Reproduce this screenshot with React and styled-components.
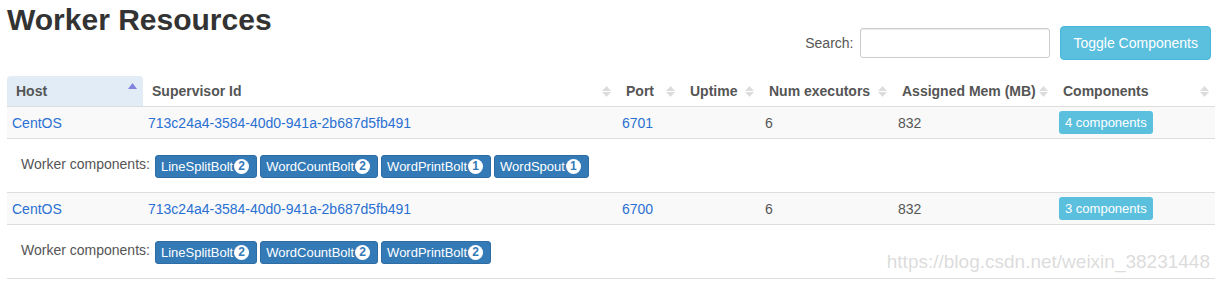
import React from 'react'
import styled, { createGlobalStyle } from 'styled-components'

const GlobalStyle = createGlobalStyle`
  body {
    margin: 0;
    background: #fff;
    font-family: "Liberation Sans", Arial, sans-serif;
    font-size: 14px;
    color: #333;
  }
`

const Page = styled.div`
  position: relative;
  padding: 0 4px 0 7px;
  width: 1219px;
  height: 283px;
  box-sizing: border-box;
  overflow: hidden;
`

const Header = styled.div`
  display: flex;
  justify-content: space-between;
  align-items: flex-start;
  height: 76px;
`

const Title = styled.h2`
  margin: 3px 0 0;
  font-size: 30px;
  line-height: 33px;
  font-weight: 700;
  color: #333;
`

const Toolbar = styled.div`
  display: flex;
  align-items: center;
  margin: 26px 4px 0 0;
`

const SearchLabel = styled.label`
  color: #555;
  font-size: 14px;
  margin-right: 7px;
`

const SearchInput = styled.input`
  width: 190px;
  height: 30px;
  box-sizing: border-box;
  border: 1px solid #ccc;
  border-radius: 3px;
  box-shadow: inset 0 1px 1px rgba(0, 0, 0, 0.075);
  margin-right: 10px;
  padding: 0 6px;
  font: inherit;
`

const ToggleButton = styled.button`
  height: 34px;
  padding: 0 12px;
  background: #5bc0de;
  border: 1px solid #46b8da;
  border-radius: 4px;
  color: #fff;
  font-family: inherit;
  font-size: 14px;
`

const Table = styled.table`
  width: 1208px;
  border-collapse: collapse;
  table-layout: fixed;
`

const Th = styled.th`
  height: 30px;
  padding: 0 6px 0 9px;
  text-align: left;
  font-weight: 700;
  color: #555;
  border-bottom: 1px solid #ddd;
  background: ${({ $sorted }) => ($sorted ? '#e1ecf6' : 'transparent')};
  border-radius: ${({ $sorted }) => ($sorted ? '4px 4px 0 0' : '0')};
`

const ThInner = styled.div`
  display: flex;
  justify-content: space-between;
  align-items: center;
  white-space: nowrap;
`

const Row = styled.tr`
  background: ${({ $striped }) => ($striped ? '#f9f9f9' : '#fff')};
  border-bottom: 1px solid #ddd;
`

const Td = styled.td`
  height: 31px;
  padding: 0 5px;
  color: #555;
  vertical-align: middle;
`

const Link = styled.a`
  color: #2a70d2;
  text-decoration: none;
`

const CountPill = styled.span`
  display: inline-block;
  height: 23px;
  line-height: 23px;
  padding: 0 6px;
  background: #5bc0de;
  border-radius: 3px;
  color: #fff;
  font-size: 13px;
`

const DetailCell = styled.td`
  height: 53px;
  padding: 0 0 0 14px;
  vertical-align: middle;
`

const DetailInner = styled.div`
  display: flex;
  align-items: center;
  gap: 3px;
  padding-top: 2px;
`

const DetailLabel = styled.span`
  color: #555;
  font-size: 14px;
  margin-right: 2px;
  margin-top: -5px;
`

const CompBadge = styled.span`
  display: inline-flex;
  align-items: center;
  height: 23px;
  box-sizing: border-box;
  padding: 0 7px 0 5px;
  background: #337ab7;
  border: 1px solid #2e6da4;
  border-radius: 3px;
  color: #fff;
  font-size: 13px;
`

const Count = styled.span`
  display: inline-block;
  width: 15px;
  height: 15px;
  line-height: 15px;
  margin-left: 1px;
  border-radius: 50%;
  background: #fff;
  color: #337ab7;
  font-size: 12px;
  font-weight: 700;
  text-align: center;
`

const Watermark = styled.div`
  position: absolute;
  right: 9px;
  top: 251px;
  font-size: 19px;
  color: rgba(190, 190, 190, 0.55);
  pointer-events: none;
`

const SortBoth = () => (
  <svg width="9" height="11" viewBox="0 0 9 11">
    <path d="M4.5 0 L9 5 L0 5 Z" fill="#dcdcdc" />
    <path d="M0 6 L9 6 L4.5 11 Z" fill="#dcdcdc" />
  </svg>
)

const SortAsc = () => (
  <svg width="9" height="11" viewBox="0 0 9 11" style={{ marginTop: '-6px' }}>
    <path d="M4.5 0 L9 6 L0 6 Z" fill="#8282df" />
  </svg>
)

const columns = [
  { label: 'Host', width: 136, sorted: true },
  { label: 'Supervisor Id', width: 474 },
  { label: 'Port', width: 64 },
  { label: 'Uptime', width: 79 },
  { label: 'Num executors', width: 133 },
  { label: 'Assigned Mem (MB)', width: 161 },
  { label: 'Components', width: 161 },
]

const workers = [
  {
    host: 'CentOS',
    id: '713c24a4-3584-40d0-941a-2b687d5fb491',
    port: '6701',
    executors: 6,
    mem: 832,
    comps: [
      ['LineSplitBolt', 2],
      ['WordCountBolt', 2],
      ['WordPrintBolt', 1],
      ['WordSpout', 1],
    ],
  },
  {
    host: 'CentOS',
    id: '713c24a4-3584-40d0-941a-2b687d5fb491',
    port: '6700',
    executors: 6,
    mem: 832,
    comps: [
      ['LineSplitBolt', 2],
      ['WordCountBolt', 2],
      ['WordPrintBolt', 2],
    ],
  },
]

export default function App() {
  return (
    <Page>
      <GlobalStyle />
      <Header>
        <Title>Worker Resources</Title>
        <Toolbar>
          <SearchLabel>Search:</SearchLabel>
          <SearchInput type="search" />
          <ToggleButton>Toggle Components</ToggleButton>
        </Toolbar>
      </Header>
      <Table>
        <colgroup>
          {columns.map((c) => (
            <col key={c.label} style={{ width: c.width }} />
          ))}
        </colgroup>
        <thead>
          <tr>
            {columns.map((c) => (
              <Th key={c.label} $sorted={c.sorted}>
                <ThInner>
                  <span>{c.label}</span>
                  {c.sorted ? <SortAsc /> : <SortBoth />}
                </ThInner>
              </Th>
            ))}
          </tr>
        </thead>
        <tbody>
          {workers.map((w) => (
            <React.Fragment key={w.port}>
              <Row $striped>
                <Td><Link href="#">{w.host}</Link></Td>
                <Td><Link href="#">{w.id}</Link></Td>
                <Td><Link href="#">{w.port}</Link></Td>
                <Td />
                <Td>{w.executors}</Td>
                <Td>{w.mem}</Td>
                <Td><CountPill>{w.comps.length} components</CountPill></Td>
              </Row>
              <Row>
                <DetailCell colSpan={7}>
                  <DetailInner>
                    <DetailLabel>Worker components:</DetailLabel>
                    {w.comps.map(([name, n]) => (
                      <CompBadge key={name}>
                        {name}
                        <Count>{n}</Count>
                      </CompBadge>
                    ))}
                  </DetailInner>
                </DetailCell>
              </Row>
            </React.Fragment>
          ))}
        </tbody>
      </Table>
      <Watermark>https://blog.csdn.net/weixin_38231448</Watermark>
    </Page>
  )
}
